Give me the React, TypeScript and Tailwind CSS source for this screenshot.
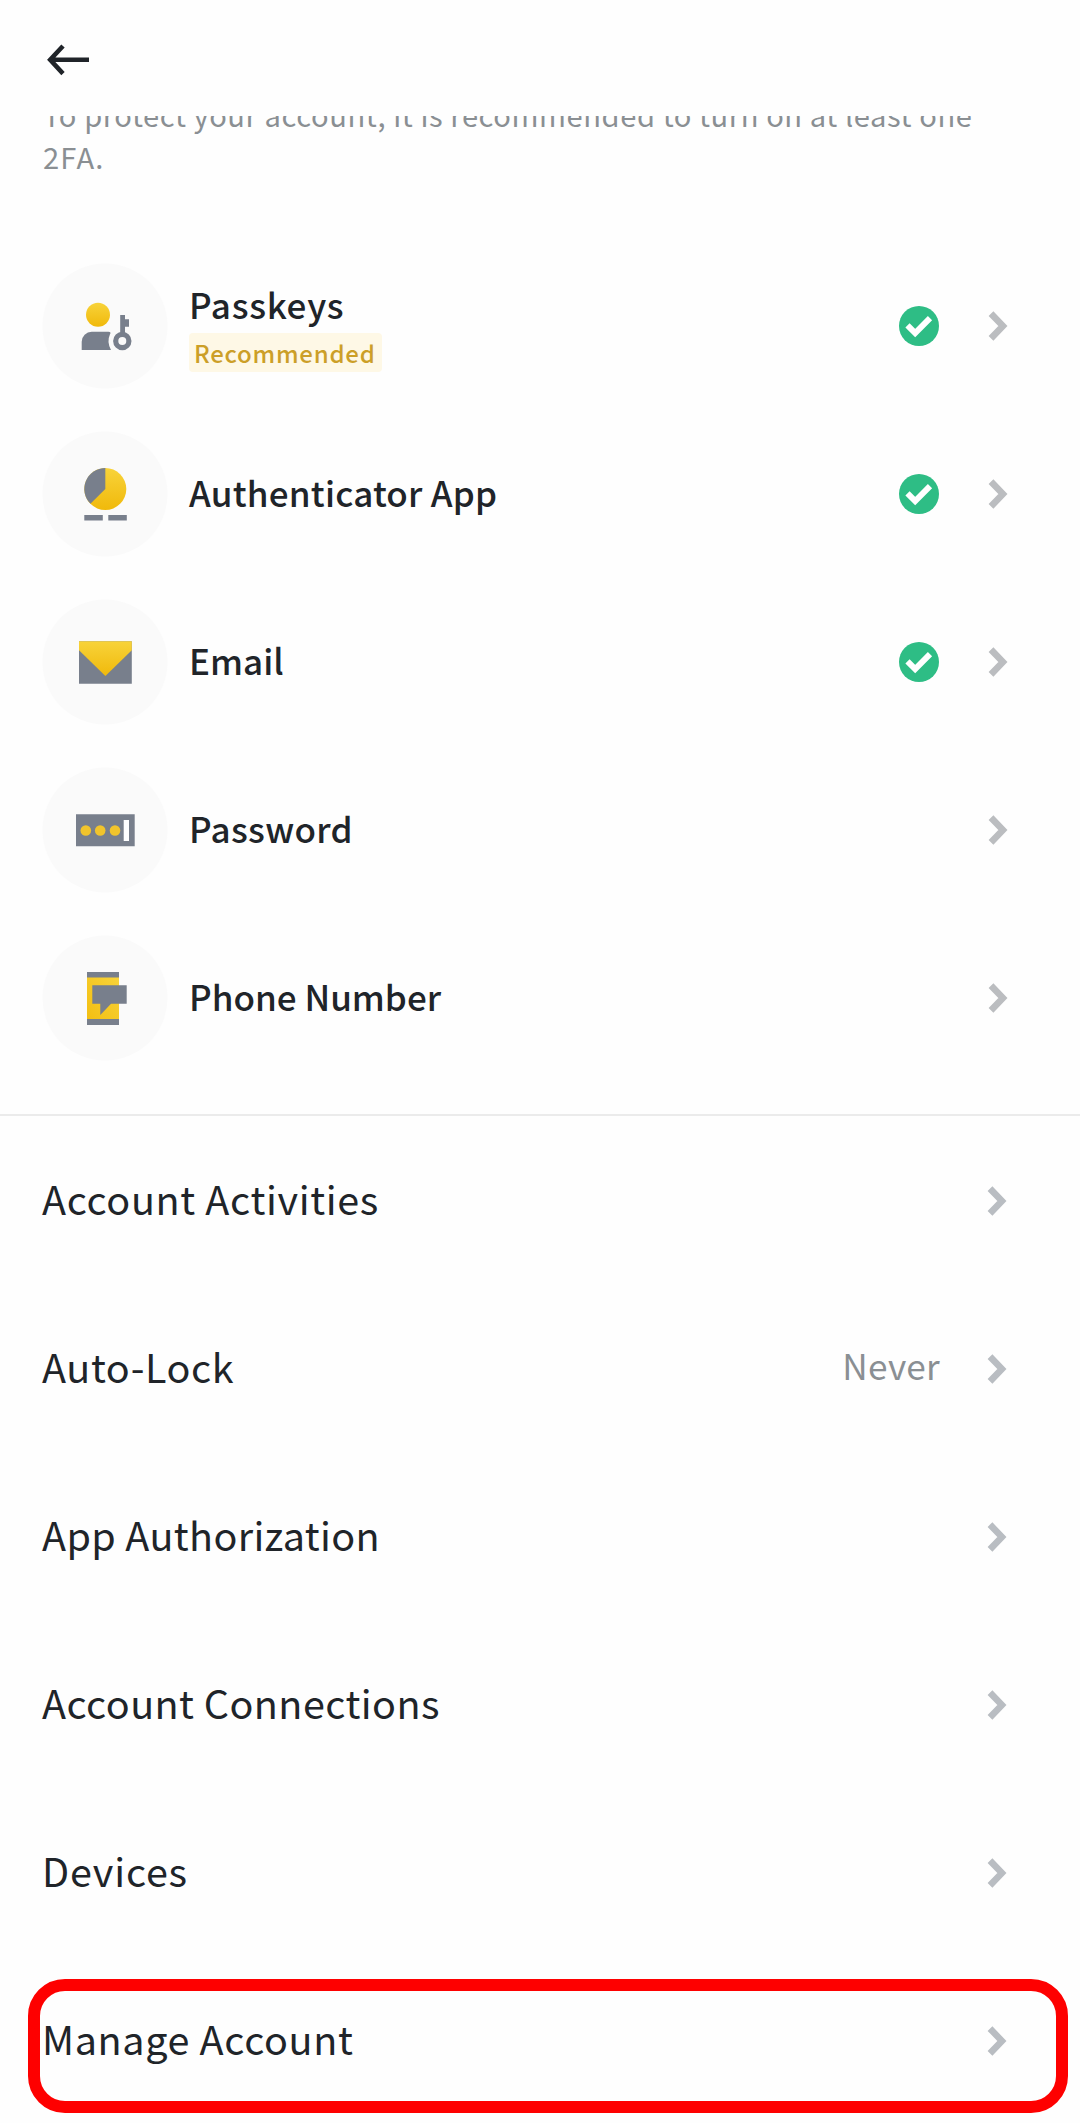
import type { ReactNode } from "react";

const GRAY = "#787f8c";

function Gradient({ id }: { id: string }) {
  return (
    <defs>
      <linearGradient id={id} x1="0" y1="0" x2="0" y2="1">
        <stop offset="0" stopColor="#f8d33a" />
        <stop offset="1" stopColor="#f0b90b" />
      </linearGradient>
    </defs>
  );
}

function Disc({ children }: { children: ReactNode }) {
  return (
    <svg className="h-[126px] w-[126px] shrink-0" viewBox="0 0 126 126">
      <circle cx="63" cy="63" r="62.5" fill="#fafafa" />
      {children}
    </svg>
  );
}

function PasskeysIcon() {
  return (
    <Disc>
      <Gradient id="g-passkeys" />
      <circle cx="56" cy="51.7" r="12" fill="url(#g-passkeys)" />
      <path d="M39.7 87V78.7a10 10 0 0 1 10-10H66.5q3 0 1.5 2.5q-3.5 7.5 1 15.8z" fill={GRAY} />
      <path d="M78.2 52h4.8v4.2h4v7.5h-4V71h-4.8z" fill={GRAY} />
      <circle cx="80.3" cy="78" r="6.6" fill="none" stroke={GRAY} strokeWidth="5.2" />
    </Disc>
  );
}

function AuthenticatorIcon() {
  return (
    <Disc>
      <Gradient id="g-auth" />
      <circle cx="63.3" cy="58" r="21" fill="url(#g-auth)" />
      <path d="M63.3 58V37A21 21 0 0 0 48.45 72.85z" fill={GRAY} />
      <path d="M42.3 84h18.5v5.6H42.3zM66.3 84h18.5v5.6H66.3z" fill={GRAY} />
    </Disc>
  );
}

function EmailIcon() {
  return (
    <Disc>
      <Gradient id="g-email" />
      <path d="M37 42.3h52.8v42.4H37z" fill={GRAY} />
      <path d="M37 42.3h52.8v8.9L63.4 77 37 51.2z" fill="url(#g-email)" />
    </Disc>
  );
}

function PasswordIcon() {
  return (
    <Disc>
      <path d="M34 47.3h58.7v32H34z" fill={GRAY} />
      <g fill="#f1c42c">
        <circle cx="43.8" cy="63.5" r="5.3" />
        <circle cx="58.2" cy="63.5" r="5.3" />
        <circle cx="73" cy="63.5" r="5.3" />
      </g>
      <path d="M81.7 53H87v21h-5.3z" fill="#ffffff" />
    </Disc>
  );
}

function PhoneIcon() {
  return (
    <Disc>
      <defs>
        <linearGradient id="g-phone" x1="1" y1="0" x2="0" y2="1">
          <stop offset="0" stopColor="#f8d33a" />
          <stop offset="1" stopColor="#f3bf12" />
        </linearGradient>
      </defs>
      <path d="M45 37h32v53H45z" fill={GRAY} />
      <path d="M45 42.4h32V84H45z" fill="url(#g-phone)" />
      <path d="M50.3 50.3h34.4v18.4H69L58.3 80V68.7h-8z" fill={GRAY} />
    </Disc>
  );
}

function BackArrow() {
  return (
    <svg className="h-[32px] w-[44px]" viewBox="0 0 44 32" fill="none" stroke="#202429" strokeWidth="4.6">
      <path d="M18 2 5.2 15.8 18 29.6M6 15.8h38" />
    </svg>
  );
}

function Check() {
  return (
    <svg className="h-10 w-10" viewBox="-20 -20 40 40">
      <circle r="20" fill="#2ebd85" />
      <path d="M-11.5-.7-3.8 7 11-7.8" fill="none" stroke="#fff" strokeWidth="6" />
    </svg>
  );
}

function Chevron({ color }: { color: string }) {
  return (
    <svg className="h-[30px] w-5" viewBox="0 0 20 30" fill="none" stroke={color} strokeWidth="6.6">
      <path d="M3 2.6 14.9 15 3 27.4" />
    </svg>
  );
}

type Factor = { label: string; tracking: string; icon: ReactNode; on?: boolean; badge?: string };

const factors: Factor[] = [
  { label: "Passkeys", tracking: "tracking-[0.7px]", icon: <PasskeysIcon />, on: true, badge: "Recommended" },
  { label: "Authenticator App", tracking: "tracking-[0.22px]", icon: <AuthenticatorIcon />, on: true },
  { label: "Email", tracking: "tracking-[0px]", icon: <EmailIcon />, on: true },
  { label: "Password", tracking: "tracking-[0.35px]", icon: <PasswordIcon /> },
  { label: "Phone Number", tracking: "tracking-[0px]", icon: <PhoneIcon /> },
];

type Setting = { label: string; tracking: string; value?: string; marked?: boolean };

const settings: Setting[] = [
  { label: "Account Activities", tracking: "tracking-[0.65px]" },
  { label: "Auto-Lock", tracking: "tracking-[0.6px]", value: "Never" },
  { label: "App Authorization", tracking: "tracking-[0.37px]" },
  { label: "Account Connections", tracking: "tracking-[0.45px]" },
  { label: "Devices", tracking: "tracking-[0.8px]" },
  { label: "Manage Account", tracking: "tracking-[0.65px]", marked: true },
];

function FactorRow({ label, tracking, icon, on, badge }: Factor) {
  return (
    <li className="flex h-[168px] items-center pr-[72px] pl-[42px]">
      {icon}
      <div className={badge ? "ml-[21px]" : "-mt-[6px] ml-[21px]"}>
        <div className={`text-[35px] leading-[45px] font-medium ${tracking}`}>{label}</div>
        {badge && (
          <div className="mt-[7px] w-fit rounded-[4px] bg-[#fef8e6] pr-[6px] pl-[5px] text-[24px] leading-[39px] font-medium tracking-[0.75px] text-[#cc9f28]">
            {badge}
          </div>
        )}
      </div>
      <div className="ml-auto flex items-center gap-[49px]">
        {on && <Check />}
        <Chevron color="#bbbdc0" />
      </div>
    </li>
  );
}

function SettingRow({ label, tracking, value, marked }: Setting) {
  return (
    <li className="relative flex h-[168px] items-center pr-[73px] pl-[42px]">
      <div className={`-mt-[6px] text-[39.5px] leading-[50px] ${tracking}`}>{label}</div>
      <div className="ml-auto flex items-center gap-[47px]">
        {value && <div className="-mt-[10px] text-[35.2px] leading-[45px] tracking-[0.25px] text-[#8a8f93]">{value}</div>}
        <Chevron color="#b9bdc2" />
      </div>
      {marked && (
        <div className="pointer-events-none absolute top-[22px] left-[28px] h-[134px] w-[1040px] rounded-[37px] border-[12px] border-[#fe0000]" />
      )}
    </li>
  );
}

export default function App() {
  return (
    <div className="h-[2123px] w-[1080px] overflow-hidden bg-[#fefefe] font-['Noto_Sans_CJK_SC','Noto_Sans',sans-serif] text-[#202429]">
      <header className="flex h-[116px] items-center pl-[45px] pt-[3px]">
        <BackArrow />
      </header>
      <div className="h-[126px] overflow-hidden">
        <p className="-mt-[23px] w-[1000px] pl-[43px] text-[29.1px] leading-[42px] tracking-[0.58px] text-[#8a8f93]">
          To protect your account, it is recommended to turn on at least one
          <br />
          <span className="tracking-[1.2px]">2FA.</span>
        </p>
      </div>
      <ul className="h-[872px]">
        {factors.map((f) => (
          <FactorRow key={f.label} {...f} />
        ))}
      </ul>
      <hr className="mb-[1px] h-0 border-0 border-t-2 border-[#ebebeb]" />
      <ul>
        {settings.map((s) => (
          <SettingRow key={s.label} {...s} />
        ))}
      </ul>
    </div>
  );
}
